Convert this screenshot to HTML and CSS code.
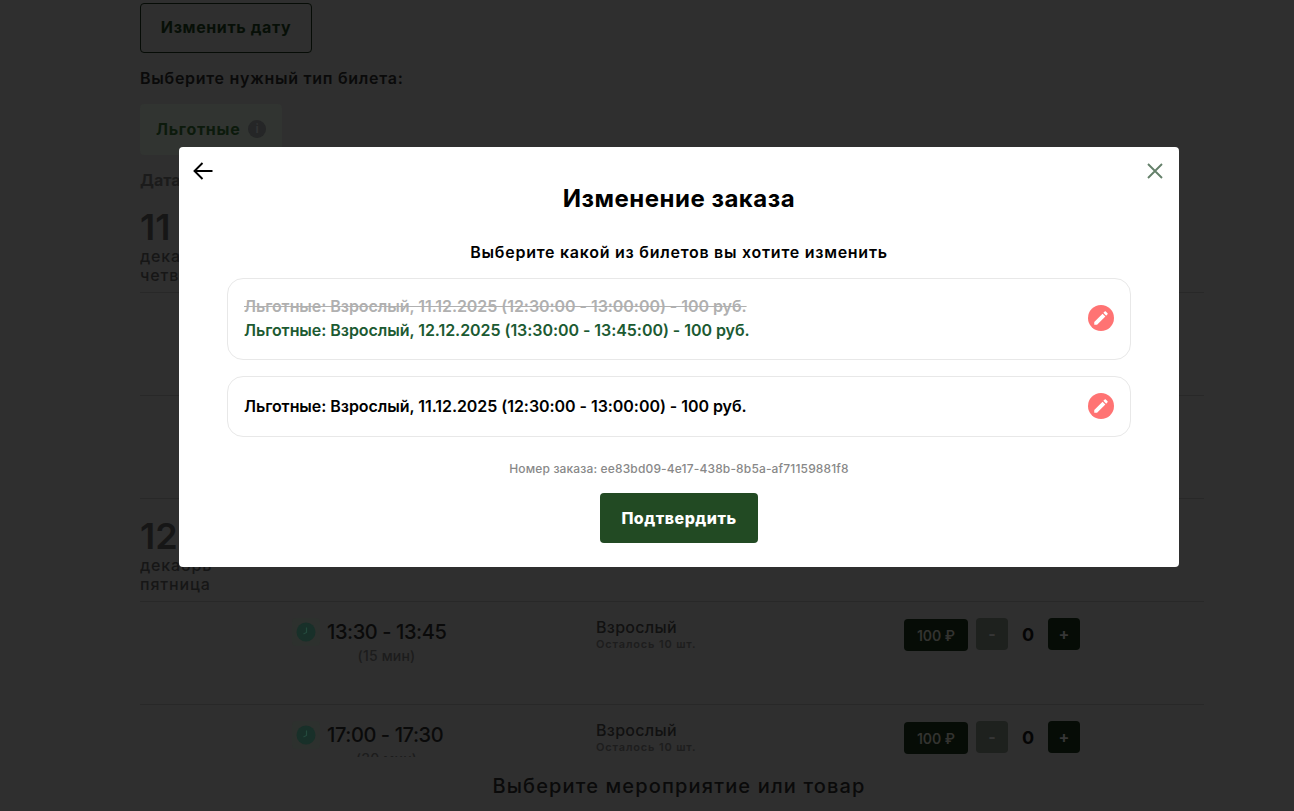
FILE: index.html
```html
<!DOCTYPE html>
<html lang="ru">

<head>
    <meta charset="UTF-8">
    <meta name="viewport" content="width=device-width, initial-scale=1.0">
    <title>Изменение заказа</title>
    <link rel="stylesheet" href="styles.css">
</head>

<body>
    <div class="page">
        <button class="change-date">Изменить дату</button>
        <p class="type-title">Выберите нужный тип билета:</p>
        <div class="tab">
            <span>Льготные</span>
            <span class="tab-info">i</span>
        </div>
        <p class="date-title">Дата</p>

        <div class="list">
            <div class="day">
                <div class="day-num">11</div>
                <div class="day-text">декабрь<br>четверг</div>
            </div>
            <div class="row">
                <div class="time">
                    <div class="time-main">
                        <span class="clock"><svg viewBox="0 0 20 20"><circle cx="10" cy="10" r="9.5" fill="#183029"/><path d="M10.5 5.5V10.5L7.5 12" fill="none" stroke="#244a3d" stroke-width="1.2"/></svg></span>
                        <span>12:30 - 13:00</span>
                    </div>
                    <div class="time-len">(30 мин)</div>
                </div>
                <div class="ticket">
                    <div class="ticket-name">Взрослый</div>
                    <div class="ticket-left">Осталось 10 шт.</div>
                </div>
                <div class="price">100 ₽</div>
                <div class="counter">
                    <span class="btn btn-minus">-</span>
                    <span class="count">0</span>
                    <span class="btn">+</span>
                </div>
            </div>
            <div class="row">
                <div class="time">
                    <div class="time-main">
                        <span class="clock"><svg viewBox="0 0 20 20"><circle cx="10" cy="10" r="9.5" fill="#183029"/><path d="M10.5 5.5V10.5L7.5 12" fill="none" stroke="#244a3d" stroke-width="1.2"/></svg></span>
                        <span>16:00 - 16:30</span>
                    </div>
                    <div class="time-len">(30 мин)</div>
                </div>
                <div class="ticket">
                    <div class="ticket-name">Взрослый</div>
                    <div class="ticket-left">Осталось 10 шт.</div>
                </div>
                <div class="price">100 ₽</div>
                <div class="counter">
                    <span class="btn btn-minus">-</span>
                    <span class="count">0</span>
                    <span class="btn">+</span>
                </div>
            </div>
            <div class="day">
                <div class="day-num">12</div>
                <div class="day-text">декабрь<br>пятница</div>
            </div>
            <div class="row">
                <div class="time">
                    <div class="time-main">
                        <span class="clock"><svg viewBox="0 0 20 20"><circle cx="10" cy="10" r="9.5" fill="#183029"/><path d="M10.5 5.5V10.5L7.5 12" fill="none" stroke="#244a3d" stroke-width="1.2"/></svg></span>
                        <span>13:30 - 13:45</span>
                    </div>
                    <div class="time-len">(15 мин)</div>
                </div>
                <div class="ticket">
                    <div class="ticket-name">Взрослый</div>
                    <div class="ticket-left">Осталось 10 шт.</div>
                </div>
                <div class="price">100 ₽</div>
                <div class="counter">
                    <span class="btn btn-minus">-</span>
                    <span class="count">0</span>
                    <span class="btn">+</span>
                </div>
            </div>
            <div class="row">
                <div class="time">
                    <div class="time-main">
                        <span class="clock"><svg viewBox="0 0 20 20"><circle cx="10" cy="10" r="9.5" fill="#183029"/><path d="M10.5 5.5V10.5L7.5 12" fill="none" stroke="#244a3d" stroke-width="1.2"/></svg></span>
                        <span>17:00 - 17:30</span>
                    </div>
                    <div class="time-len">(30 мин)</div>
                </div>
                <div class="ticket">
                    <div class="ticket-name">Взрослый</div>
                    <div class="ticket-left">Осталось 10 шт.</div>
                </div>
                <div class="price">100 ₽</div>
                <div class="counter">
                    <span class="btn btn-minus">-</span>
                    <span class="count">0</span>
                    <span class="btn">+</span>
                </div>
            </div>
        </div>

        <h3 class="next-title">Выберите мероприятие или товар</h3>
    </div>

    <div class="overlay">
        <div class="modal">
            <button class="modal-back" aria-label="Назад">
                <svg viewBox="0 0 20 20"><path d="M19.5 10H1.5M9.5 2L1.5 10L9.5 18" fill="none" stroke="#000" stroke-width="1.9"/></svg>
            </button>
            <button class="modal-close" aria-label="Закрыть">
                <svg viewBox="0 0 16 16"><path d="M1 1L15 15M15 1L1 15" fill="none" stroke="#64806a" stroke-width="1.9"/></svg>
            </button>

            <h2 class="modal-title">Изменение заказа</h2>
            <p class="modal-sub">Выберите какой из билетов вы хотите изменить</p>

            <div class="order-card">
                <div>
                    <div class="order-line order-old">Льготные: Взрослый, 11.12.2025 (12:30:00 - 13:00:00) - 100 руб.</div>
                    <div class="order-line order-new">Льготные: Взрослый, 12.12.2025 (13:30:00 - 13:45:00) - 100 руб.</div>
                </div>
                <span class="edit"><svg viewBox="0 0 24 24"><path d="M3 17.25V21h3.75L17.81 9.94l-3.75-3.75L3 17.25zM20.71 7.04c.39-.39.39-1.02 0-1.41l-2.34-2.34c-.39-.39-1.02-.39-1.41 0l-1.83 1.83 3.75 3.75 1.83-1.83z" fill="#fff"/></svg></span>
            </div>
            <div class="order-card order-card-single">
                <div class="order-line">Льготные: Взрослый, 11.12.2025 (12:30:00 - 13:00:00) - 100 руб.</div>
                <span class="edit"><svg viewBox="0 0 24 24"><path d="M3 17.25V21h3.75L17.81 9.94l-3.75-3.75L3 17.25zM20.71 7.04c.39-.39.39-1.02 0-1.41l-2.34-2.34c-.39-.39-1.02-.39-1.41 0l-1.83 1.83 3.75 3.75 1.83-1.83z" fill="#fff"/></svg></span>
            </div>

            <p class="order-id">Номер заказа: ee83bd09-4e17-438b-8b5a-af71159881f8</p>
            <button class="confirm">Подтвердить</button>
        </div>
    </div>
</body>

</html>
```

FILE: styles.css
```css
* {
    box-sizing: border-box;
}

html, body {
    height: 100%;
}

body {
    margin: 0;
    overflow: hidden;
    background: #2f2f2f;
    color: #0a0a0a;
    font-family: Inter, "Noto Sans", sans-serif;
}

button {
    font-family: inherit;
}

.page {
    width: 1078px;
    margin-left: 140px;
    padding-top: 3px;
}

.change-date {
    display: block;
    width: 172px;
    height: 50px;
    padding: 0 0 2px;
    background: none;
    border: 1px solid #060c06;
    border-radius: 4px;
    color: #070f07;
    font-size: 16px;
    font-weight: 700;
    letter-spacing: .6px;
}

.type-title {
    margin: 15px 0 0;
    font-size: 16px;
    line-height: 20px;
    font-weight: 600;
    letter-spacing: .72px;
}

.tab {
    display: flex;
    align-items: center;
    gap: 8px;
    width: 142px;
    height: 51px;
    margin-top: 16px;
    padding: 0 0 1px 16px;
    background: #313431;
    border-radius: 4px;
    color: #0c1a0c;
    font-size: 16px;
    font-weight: 700;
    letter-spacing: .7px;
}

.tab-info {
    width: 18px;
    height: 18px;
    border-radius: 50%;
    background: #252627;
    color: #323334;
    font-size: 12px;
    line-height: 18px;
    text-align: center;
}

.date-title {
    margin: 15px 0 0;
    color: #1b1b1b;
    font-size: 16px;
    line-height: 20px;
    font-weight: 700;
}

.list {
    width: 1064px;
    height: 567px;
    overflow: hidden;
}

.day {
    height: 103px;
    padding-top: 17px;
    border-bottom: 1px solid #282828;
    color: #161616;
}

.day-num {
    font-size: 36px;
    line-height: 40px;
    font-weight: 600;
}

.day-text {
    font-size: 16px;
    line-height: 19px;
    font-weight: 500;
    letter-spacing: .85px;
}

.row {
    display: grid;
    grid-template-columns: 304px 308px 72px auto;
    height: 103px;
    padding: 16px 0 0 152px;
    border-bottom: 1px solid #282828;
}

.time-main {
    display: flex;
    align-items: center;
    gap: 7px;
    font-size: 20px;
    line-height: 28px;
    font-weight: 500;
    letter-spacing: -.4px;
}

.clock {
    display: flex;
    align-items: center;
    justify-content: center;
    width: 28px;
    height: 28px;
    background: #2d312e;
    border-radius: 4px;
}

.clock svg {
    width: 20px;
    height: 20px;
}

.time-len {
    width: 153px;
    padding-left: 36px;
    color: #1c1c1c;
    font-size: 14px;
    line-height: 20px;
    font-weight: 500;
    letter-spacing: .2px;
    text-align: center;
}

.ticket {
    margin-top: -1px;
}

.ticket-name {
    color: #111;
    font-size: 16px;
    line-height: 20px;
    font-weight: 500;
    letter-spacing: .3px;
}

.ticket-left {
    color: #1d1d1d;
    font-size: 11px;
    line-height: 14px;
    font-weight: 600;
    letter-spacing: .85px;
}

.price {
    display: flex;
    align-items: center;
    justify-content: center;
    width: 64px;
    height: 32px;
    margin-top: 1px;
    background: #060c06;
    border-radius: 4px;
    color: #333330;
    font-size: 14px;
    font-weight: 600;
}

.counter {
    display: flex;
    align-items: center;
    height: 32px;
}

.btn {
    display: flex;
    align-items: center;
    justify-content: center;
    width: 32px;
    height: 32px;
    background: #060c06;
    border-radius: 4px;
    color: #363636;
    font-size: 16px;
    font-weight: 700;
}

.btn-minus {
    background: #1e211e;
}

.count {
    width: 40px;
    color: #050505;
    font-size: 18px;
    font-weight: 700;
    text-align: center;
}

.next-title {
    margin: 16px 0 0;
    color: #0a0a0a;
    font-size: 20px;
    line-height: 26px;
    font-weight: 500;
    letter-spacing: 1.15px;
    text-align: center;
}

.overlay {
    position: fixed;
    inset: 0;
    padding: 147px 0 0 179px;
}

.modal {
    position: relative;
    display: flex;
    flex-direction: column;
    align-items: center;
    width: 1000px;
    height: 420px;
    padding: 37px 48px 0;
    background: #fff;
    border-radius: 4px;
    color: #000;
}

.modal-back, .modal-close {
    position: absolute;
    top: 14px;
    width: 20px;
    height: 20px;
    padding: 0;
    background: none;
    border: none;
}

.modal-back {
    left: 14px;
}

.modal-close {
    right: 14px;
    padding: 2px;
}

.modal-title {
    margin: 0;
    font-size: 24px;
    line-height: 30px;
    font-weight: 700;
    letter-spacing: .5px;
}

.modal-sub {
    margin: 28px 0 0;
    font-size: 16px;
    line-height: 20px;
    font-weight: 600;
    letter-spacing: .74px;
}

.order-card {
    display: flex;
    align-items: center;
    justify-content: space-between;
    width: 904px;
    margin-top: 16px;
    padding: 15px 16px 17px;
    background: #fff;
    border: 1px solid #e8e8e8;
    border-radius: 16px;
}

.order-card-single {
    height: 61px;
}

.order-line {
    font-size: 16px;
    line-height: 24px;
    font-weight: 600;
    letter-spacing: -.05px;
}

.order-old {
    color: #b0b0b0;
    text-decoration: line-through;
}

.order-new {
    color: #1c5a32;
}

.edit {
    display: flex;
    align-items: center;
    justify-content: center;
    width: 26px;
    height: 26px;
    background: #ff7373;
    border-radius: 50%;
}

.edit svg {
    width: 18px;
    height: 18px;
}

.order-id {
    margin: 24px 0 0;
    color: #888;
    font-size: 12px;
    line-height: 15px;
    font-weight: 500;
    letter-spacing: .15px;
}

.confirm {
    width: 158px;
    height: 50px;
    margin-top: 17px;
    padding: 0;
    background: #224a23;
    border: none;
    border-radius: 4px;
    color: #fff;
    font-size: 16px;
    font-weight: 800;
    letter-spacing: .5px;
}
```
